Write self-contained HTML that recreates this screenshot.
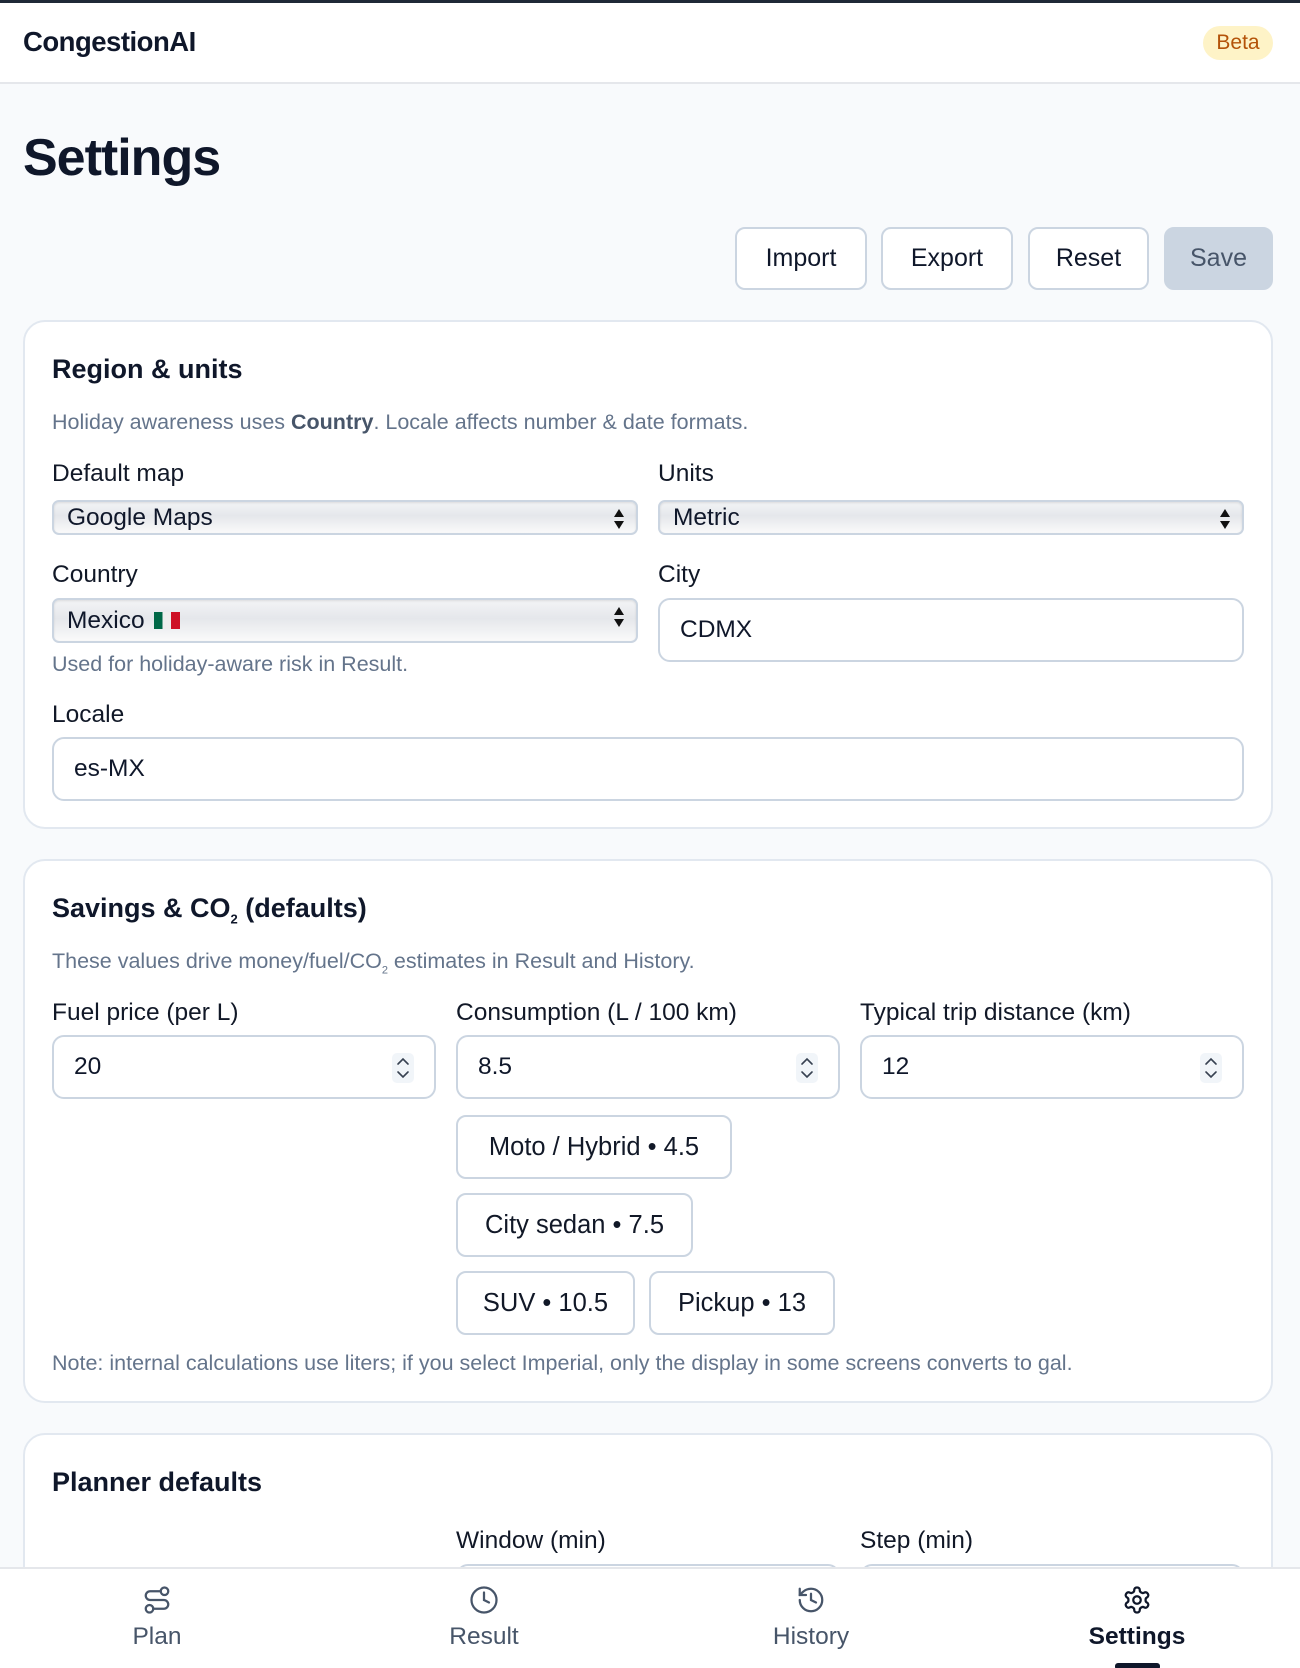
<!DOCTYPE html>
<html style="overflow:hidden;height:1668px"><head><meta charset="utf-8"><style>
*{box-sizing:border-box;margin:0;padding:0}
body{width:1300px;height:1668px;overflow:hidden;font-family:"Liberation Sans",sans-serif;color:#0f172a;background:#f8fafc;position:relative}
.a{position:absolute}
.hdr{left:0;top:0;width:1300px;height:84px;background:#fff;border-top:3px solid #1f2937;border-bottom:2px solid #e5e7eb}
.btn{position:absolute;top:227px;height:63px;border:2px solid #cbd5e1;border-radius:10px;background:#fff;font-size:25px;display:flex;align-items:center;justify-content:center;color:#0f172a}
.card{position:absolute;left:23px;width:1250px;background:#fff;border:2px solid #e2e8f0;border-radius:22px}
.h2{position:absolute;left:27px;font-size:27px;font-weight:bold}
.help{position:absolute;font-size:21.5px;color:#64748b;white-space:nowrap}
.lbl{position:absolute;font-size:24.5px;color:#111827;white-space:nowrap}
.sel{position:absolute;height:35px;border:2px solid #cbd5e1;border-radius:7px;background:linear-gradient(#f3f4f6,#e5e7eb 45%,#fafafa);font-size:24.5px;padding-left:13px;display:flex;align-items:center;box-shadow:inset 0 1px 2px rgba(0,0,0,.1)}
.sel:after{content:"";position:absolute;right:12px;top:7px;width:0;height:0;border-left:5px solid transparent;border-right:5px solid transparent;border-bottom:8px solid #111;}
.sel:before{content:"";position:absolute;right:12px;top:19px;width:0;height:0;border-left:5px solid transparent;border-right:5px solid transparent;border-top:8px solid #111;}
.inp{position:absolute;height:64px;border:2px solid #cbd5e1;border-radius:12px;background:#fff;font-size:24.5px;padding-left:20px;display:flex;align-items:center}
.spin{position:absolute;right:20px;top:16px;width:22px;height:30px;background:#f1f5f9;border-radius:5px}
.chip{position:absolute;height:64px;border:2px solid #cbd5e1;border-radius:10px;background:#fff;font-size:25.5px;display:flex;align-items:center;justify-content:center;color:#111827}
.nav{left:0;top:1567px;width:1300px;height:101px;background:#fff;border-top:2px solid #e5e7eb}
.ni{position:absolute;top:16px;width:200px;text-align:center;color:#475569;font-size:24.5px}
.ni svg{display:block;margin:0 auto 8px}
</style></head><body>
<div class="a hdr"></div>
<div class="a" style="left:23px;top:26px;font-size:27.5px;font-weight:bold;letter-spacing:-.5px">CongestionAI</div>
<div class="a" style="left:1203px;top:26px;width:70px;height:34px;border-radius:17px;background:#fef3c7;color:#b45309;font-size:21px;display:flex;align-items:center;justify-content:center">Beta</div>
<div class="a" style="left:23px;top:128px;font-size:52px;font-weight:bold;letter-spacing:-1px">Settings</div>
<div class="btn" style="left:735px;width:132px">Import</div>
<div class="btn" style="left:881px;width:132px">Export</div>
<div class="btn" style="left:1028px;width:121px">Reset</div>
<div class="btn" style="left:1164px;width:109px;background:#cbd5e1;border-color:#cbd5e1;color:#475569">Save</div>

<div class="card" style="top:320px;height:509px">
<div class="h2" style="top:32px">Region &amp; units</div>
<div class="help" style="left:27px;top:88px">Holiday awareness uses <b style="color:#475569">Country</b>. Locale affects number &amp; date formats.</div>
<div class="lbl" style="left:27px;top:138px">Default map</div>
<div class="lbl" style="left:633px;top:138px">Units</div>
<div class="sel" style="left:27px;top:178px;width:586px">Google Maps</div>
<div class="sel" style="left:633px;top:178px;width:586px">Metric</div>
<div class="lbl" style="left:27px;top:239px">Country</div>
<div class="lbl" style="left:633px;top:239px">City</div>
<div class="sel" style="left:27px;top:276px;width:586px;height:45px">Mexico <span style="display:inline-block;width:26px;height:17px;margin-left:9px;background:linear-gradient(90deg,#006847 33%,#eee 33% 66%,#ce1126 66%)"></span></div>
<div class="inp" style="left:633px;top:276px;width:586px">CDMX</div>
<div class="help" style="left:27px;top:330px">Used for holiday-aware risk in Result.</div>
<div class="lbl" style="left:27px;top:379px">Locale</div>
<div class="inp" style="left:27px;top:415px;width:1192px">es-MX</div>
</div>

<div class="card" style="top:859px;height:544px">
<div class="h2" style="top:32px">Savings &amp; CO<sub style="font-size:13px">2</sub> (defaults)</div>
<div class="help" style="left:27px;top:88px">These values drive money/fuel/CO<sub style="font-size:11px">2</sub> estimates in Result and History.</div>
<div class="lbl" style="left:27px;top:138px">Fuel price (per L)</div>
<div class="lbl" style="left:431px;top:138px">Consumption (L / 100 km)</div>
<div class="lbl" style="left:835px;top:138px">Typical trip distance (km)</div>
<div class="inp" style="left:27px;top:174px;width:384px">20<div class="spin"><svg width="22" height="30" viewBox="0 0 22 30" fill="none" stroke="#374151" stroke-width="1.6" stroke-linecap="round"><path d="M6 11l5-5 5 5M6 19l5 5 5-5"/></svg></div></div>
<div class="inp" style="left:431px;top:174px;width:384px">8.5<div class="spin"><svg width="22" height="30" viewBox="0 0 22 30" fill="none" stroke="#374151" stroke-width="1.6" stroke-linecap="round"><path d="M6 11l5-5 5 5M6 19l5 5 5-5"/></svg></div></div>
<div class="inp" style="left:835px;top:174px;width:384px">12<div class="spin"><svg width="22" height="30" viewBox="0 0 22 30" fill="none" stroke="#374151" stroke-width="1.6" stroke-linecap="round"><path d="M6 11l5-5 5 5M6 19l5 5 5-5"/></svg></div></div>
<div class="chip" style="left:431px;top:254px;width:276px">Moto / Hybrid • 4.5</div>
<div class="chip" style="left:431px;top:332px;width:237px">City sedan • 7.5</div>
<div class="chip" style="left:431px;top:410px;width:179px">SUV • 10.5</div>
<div class="chip" style="left:624px;top:410px;width:186px">Pickup • 13</div>
<div class="help" style="left:27px;top:490px">Note: internal calculations use liters; if you select Imperial, only the display in some screens converts to gal.</div>
</div>

<div class="card" style="top:1433px;height:230px">
<div class="h2" style="top:32px">Planner defaults</div>
<div class="lbl" style="left:431px;top:92px">Window (min)</div>
<div class="lbl" style="left:835px;top:92px">Step (min)</div>
<div class="inp" style="left:431px;top:129px;width:384px"></div>
<div class="inp" style="left:835px;top:129px;width:384px"></div>
</div>

<div class="a nav">
<div class="ni" style="left:57px"><svg width="30" height="30" viewBox="0 0 24 24" fill="none" stroke="#475569" stroke-width="1.8" stroke-linecap="round"><circle cx="6" cy="19" r="3"/><circle cx="18" cy="5" r="3"/><path d="M9 19h8.5a3.5 3.5 0 0 0 0-7h-11a3.5 3.5 0 0 1 0-7H15"/></svg>Plan</div>
<div class="ni" style="left:384px"><svg width="30" height="30" viewBox="0 0 24 24" fill="none" stroke="#475569" stroke-width="1.8" stroke-linecap="round"><circle cx="12" cy="12" r="10"/><path d="M12 6v6l4 2"/></svg>Result</div>
<div class="ni" style="left:711px"><svg width="30" height="30" viewBox="0 0 24 24" fill="none" stroke="#475569" stroke-width="1.8" stroke-linecap="round"><path d="M3 12a9 9 0 1 0 9-9 9.75 9.75 0 0 0-6.74 2.74L3 8"/><path d="M3 3v5h5"/><path d="M12 7v5l4 2"/></svg>History</div>
<div class="ni" style="left:1037px;color:#0f172a;font-weight:bold"><svg width="30" height="30" viewBox="0 0 24 24" fill="none" stroke="#0f172a" stroke-width="1.8" stroke-linecap="round"><path d="M12.22 2h-.44a2 2 0 0 0-2 2v.18a2 2 0 0 1-1 1.730l-.43.25a2 2 0 0 1-2 0l-.15-.08a2 2 0 0 0-2.73.73l-.22.38a2 2 0 0 0 .73 2.73l.15.1a2 2 0 0 1 1 1.72v.51a2 2 0 0 1-1 1.74l-.15.09a2 2 0 0 0-.73 2.73l.22.38a2 2 0 0 0 2.73.73l.15-.08a2 2 0 0 1 2 0l.43.25a2 2 0 0 1 1 1.73V20a2 2 0 0 0 2 2h.44a2 2 0 0 0 2-2v-.18a2 2 0 0 1 1-1.73l.43-.25a2 2 0 0 1 2 0l.15.08a2 2 0 0 0 2.73-.73l.22-.39a2 2 0 0 0-.73-2.73l-.15-.08a2 2 0 0 1-1-1.74v-.5a2 2 0 0 1 1-1.74l.15-.09a2 2 0 0 0 .73-2.73l-.22-.38a2 2 0 0 0-2.73-.73l-.15.08a2 2 0 0 1-2 0l-.43-.25a2 2 0 0 1-1-1.73V4a2 2 0 0 0-2-2z"/><circle cx="12" cy="12" r="3"/></svg>Settings</div>
<div class="a" style="left:1115px;top:94px;width:45px;height:7px;border-radius:3px;background:#0f172a"></div>
</div>
</body></html>
